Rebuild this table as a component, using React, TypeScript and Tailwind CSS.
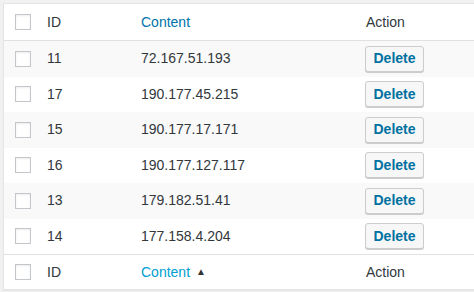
const ROWS = [
  { id: '11', ip: '72.167.51.193' },
  { id: '17', ip: '190.177.45.215' },
  { id: '15', ip: '190.177.17.171' },
  { id: '16', ip: '190.177.127.117' },
  { id: '13', ip: '179.182.51.41' },
  { id: '14', ip: '177.158.4.204' },
];

const COLS = 'grid grid-cols-[43px_94px_225px_1fr] items-center';

function Checkbox() {
  return (
    <span className="block w-4 h-4 ml-[11px] border border-[#c3c7cb] bg-white shadow-[inset_0_1px_2px_rgba(0,0,0,0.08)]" />
  );
}

function HeadRow({ sorted }: { sorted?: boolean }) {
  return (
    <div className={`${COLS} h-full text-[#32373c]`}>
      <Checkbox />
      <span>ID</span>
      <span className={`flex items-center gap-[6px] ${sorted ? 'text-[#00a0d2]' : 'text-[#0073aa]'}`}>
        Content
        {sorted && <span className="text-[10px] text-[#333] mt-[-2px]">▲</span>}
      </span>
      <span>Action</span>
    </div>
  );
}

export default function App() {
  return (
    <div
      className="w-[474px] h-[292px] bg-[#f1f1f1] pt-[3px] pl-[3px] overflow-hidden text-[14px]"
      style={{ fontFamily: '"Liberation Sans", Arial, sans-serif' }}
    >
      <div className="w-[520px] bg-white border border-[#e5e5e5] shadow-[0_1px_1px_rgba(0,0,0,0.04)]">
        {/* header */}
        <div className="h-[37px] border-b border-[#e1e1e1]">
          <HeadRow />
        </div>

        {/* rows */}
        {ROWS.map((r, i) => (
          <div
            key={r.id}
            className={`${COLS} h-[35.5px] text-[#32373c] ${i % 2 === 0 ? 'bg-[#f9f9f9]' : 'bg-white'}`}
          >
            <Checkbox />
            <span>{r.id}</span>
            <span>{r.ip}</span>
            <span>
              <button className="-ml-px h-[26px] w-[59px] rounded-[3px] border border-[#cccccc] bg-[#f7f7f7] shadow-[0_1px_0_#cccccc] text-[14px] font-bold text-[#0071a1]">
                Delete
              </button>
            </span>
          </div>
        ))}

        {/* footer */}
        <div className="h-[35px] border-t border-[#e1e1e1]">
          <HeadRow sorted />
        </div>
      </div>
    </div>
  );
}
